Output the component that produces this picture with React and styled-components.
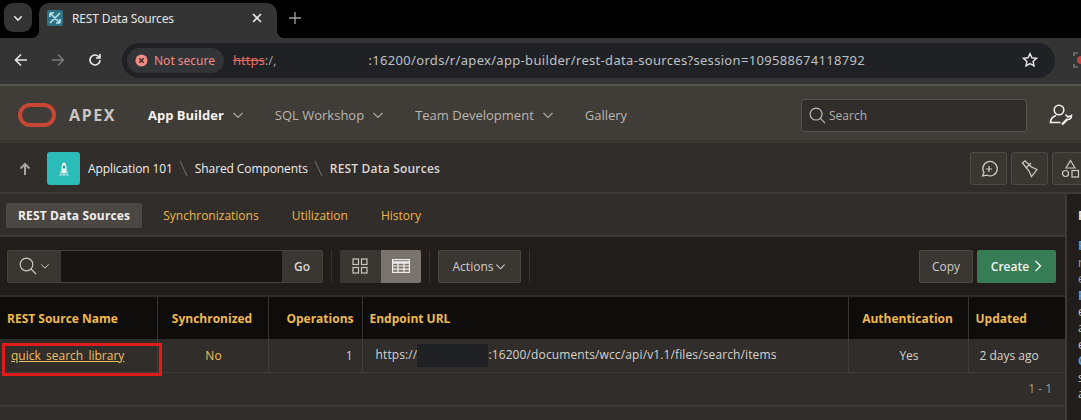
import React from 'react'
import styled, {createGlobalStyle} from 'styled-components'

const Global = createGlobalStyle`
  html, body {
    margin: 0;
    padding: 0;
    background: #312d2a;
    overflow: hidden;
  }
  * {
    box-sizing: border-box;
  }
`

const Chevron = ({size = 12, color = '#a9a6a1', width = 1.2}) => (
  <svg width={size} height={size} viewBox="0 0 12 12" fill="none" stroke={color} strokeWidth={width}>
    <path d="M1.5 4l4.5 4.5L10.5 4" />
  </svg>
)

const SearchIcon = ({size = 18, color = '#c9c6c2'}) => (
  <svg width={size} height={size} viewBox="0 0 18 18" fill="none" stroke={color} strokeWidth="1.2">
    <circle cx="7.5" cy="7.5" r="6.3" />
    <path d="M12 12l5 5" />
  </svg>
)

const App = () => (
  <Page>
    <Global />
    <TabStrip>
      <TabMenu>
        <Chevron size={10} color="#e8e8e8" width={1.8} />
      </TabMenu>
      <Tab>
        <Favicon>
          <svg width="16" height="16" viewBox="0 0 16 16" fill="none" stroke="#b5dde3" strokeWidth="1.7">
            <path d="M3 3l10 10M13 3L3 13M3 3h4M3 3v4M13 13H9M13 13V9" />
          </svg>
        </Favicon>
        <TabTitle>REST Data Sources</TabTitle>
        <TabClose>
          <svg width="10" height="10" viewBox="0 0 10 10" stroke="#e8e8e8" strokeWidth="1.6">
            <path d="M1 1l8 8M9 1L1 9" />
          </svg>
        </TabClose>
      </Tab>
      <NewTab>
        <svg width="12" height="12" viewBox="0 0 12 12" stroke="#a0a0a0" strokeWidth="1.3">
          <path d="M6 0v12M0 6h12" />
        </svg>
      </NewTab>
    </TabStrip>

    <BrowserBar>
      <NavButton>
        <svg width="14" height="14" viewBox="0 0 14 14" fill="none" stroke="#e8e8e8" strokeWidth="1.6">
          <path d="M13 7H1.5M7 1.5L1.5 7 7 12.5" />
        </svg>
      </NavButton>
      <NavButton>
        <svg width="14" height="14" viewBox="0 0 14 14" fill="none" stroke="#7c7c7c" strokeWidth="1.4">
          <path d="M1 7h11.5M7 1.5L12.5 7 7 12.5" />
        </svg>
      </NavButton>
      <NavButton>
        <svg width="14" height="14" viewBox="0 0 14 14" fill="none" stroke="#e8e8e8" strokeWidth="1.6">
          <path d="M12 7a5 5 0 1 1-1.5-3.6L12 5M12 1v4H8" />
        </svg>
      </NavButton>
      <Omnibox>
        <SecurityChip>
          <svg width="13" height="13" viewBox="0 0 13 13">
            <circle cx="6.5" cy="6.5" r="6" fill="#f28b82" />
            <path d="M4.3 4.3l4.4 4.4M8.7 4.3L4.3 8.7" stroke="#3a2a2a" strokeWidth="1.5" />
          </svg>
          Not secure
        </SecurityChip>
        <Scheme>https</Scheme>
        <UrlText>:/,</UrlText>
        <UrlRest>:16200/ords/r/apex/app-builder/rest-data-sources?session=109588674118792</UrlRest>
        <Star>
          <svg width="16" height="16" viewBox="0 0 16 16" fill="none" stroke="#e8e8e8" strokeWidth="1.4">
            <path d="M8 1.6l1.9 4.2 4.6.5-3.4 3.1.9 4.5L8 11.6l-4 2.3.9-4.5L1.5 6.3l4.6-.5z" />
          </svg>
        </Star>
      </Omnibox>
      <ExtensionIcon>
        <svg width="12" height="18" viewBox="0 0 12 18" fill="none">
          <path d="M5 2H1v3M1 13v3h4" stroke="#8a8a8a" strokeWidth="1.2" />
          <circle cx="8" cy="9" r="4" fill="#c0453d" />
        </svg>
      </ExtensionIcon>
    </BrowserBar>

    <ApexHeader>
      <Logo>
        <svg width="38" height="26" viewBox="0 0 38 26" fill="none">
          <rect x="2" y="3" width="34" height="20" rx="10" stroke="#c74634" strokeWidth="4" />
        </svg>
        <LogoText>APEX</LogoText>
      </Logo>
      <MainNav>
        <MainNavItem $active>
          App Builder <Chevron />
        </MainNavItem>
        <MainNavItem>
          SQL Workshop <Chevron />
        </MainNavItem>
        <MainNavItem>
          Team Development <Chevron />
        </MainNavItem>
        <MainNavItem>Gallery</MainNavItem>
      </MainNav>
      <HeaderSearch>
        <SearchIcon size={17} color="#c2bfbb" />
        <span>Search</span>
      </HeaderSearch>
      <UserIcon>
        <svg width="24" height="22" viewBox="0 0 24 22" fill="none" stroke="#f4f2f0" strokeWidth="1.6">
          <circle cx="10" cy="6" r="4.8" />
          <path d="M7 11.5C4 12.5 1.5 14.5 1.5 18.5h10" />
          <path d="M13 20.5l5.5-5.5" strokeWidth="2.4" />
          <path d="M16.5 10.5l2.5 2.5 3.5-1.5c0 2.5-1.5 4-4 4" />
        </svg>
      </UserIcon>
    </ApexHeader>

    <Breadcrumb>
      <UpArrow>
        <svg width="12" height="13" viewBox="0 0 12 13" fill="none" stroke="#a8a4a0" strokeWidth="2">
          <path d="M6 13V2M1.5 6.5L6 2l4.5 4.5" />
        </svg>
      </UpArrow>
      <AppBadge>
        <svg width="12" height="16" viewBox="0 0 12 16">
          <path d="M1.5 15l1-5h1v5zM10.5 15l-1-5h-1v5z" fill="#9fdcd9" />
          <path d="M6 1c1.5 1 2.5 3 2.5 5.5V12h-5V6.5C3.5 4 4.5 2 6 1z" fill="#eefaf9" />
          <rect x="4.8" y="4.5" width="2.4" height="3" fill="#2a8f8c" />
          <rect x="4.5" y="12.5" width="3" height="2" fill="#bfeae8" />
        </svg>
      </AppBadge>
      <Crumb>Application 101</Crumb>
      <CrumbDivider />
      <Crumb>Shared Components</Crumb>
      <CrumbDivider />
      <Crumb $current>REST Data Sources</Crumb>
      <PageTools>
        <ToolButton>
          <svg width="20" height="20" viewBox="0 0 20 20" fill="none" stroke="#d0cdc9" strokeWidth="1.2">
            <path d="M3.5 17L5 13.6a7.2 7.2 0 1 1 3 2.6z" />
            <path d="M10 7v6M7 10h6" />
          </svg>
        </ToolButton>
        <ToolButton>
          <svg width="20" height="20" viewBox="0 0 20 20" fill="none" stroke="#d0cdc9" strokeWidth="1.2">
            <path d="M2.5 4L5 1.8 11.5 8l5.5 2.5-5.5 7L9 12z" />
            <path d="M6 9l5-5" />
          </svg>
        </ToolButton>
        <ToolButton>
          <svg width="20" height="20" viewBox="0 0 20 20" fill="none" stroke="#d0cdc9" strokeWidth="1.2">
            <path d="M9.5 1.5L14 9H5z" />
            <circle cx="4.5" cy="14.5" r="3" />
            <rect x="11" y="11.5" width="6.5" height="6.5" />
          </svg>
        </ToolButton>
      </PageTools>
    </Breadcrumb>

    <Body>
      <Main>
        <TabsRow>
          <PageTab $active>REST Data Sources</PageTab>
          <PageTab>Synchronizations</PageTab>
          <PageTab>Utilization</PageTab>
          <PageTab>History</PageTab>
        </TabsRow>

        <Toolbar>
          <SearchGroup>
            <SearchToggle>
              <SearchIcon size={18} />
              <Chevron size={10} color="#c9c6c2" />
            </SearchToggle>
            <SearchInput />
            <GoButton>Go</GoButton>
          </SearchGroup>
          <ToolbarDivider />
          <ViewToggle>
            <ViewButton>
              <svg width="16" height="16" viewBox="0 0 16 16" fill="none" stroke="#c9c6c2" strokeWidth="1.2">
                <rect x="1" y="1" width="5.5" height="5.5" />
                <rect x="9.5" y="1" width="5.5" height="5.5" />
                <rect x="1" y="9.5" width="5.5" height="5.5" />
                <rect x="9.5" y="9.5" width="5.5" height="5.5" />
              </svg>
            </ViewButton>
            <ViewButton $active>
              <svg width="18" height="14" viewBox="0 0 18 14" fill="none" stroke="#f0eeec" strokeWidth="1.2">
                <rect x="0.6" y="0.6" width="16.8" height="12.8" />
                <path d="M0.6 3.5h16.8" strokeWidth="2.6" />
                <path d="M0.6 7h16.8M0.6 10.2h16.8M6 3.5v9.9M12 3.5v9.9" />
              </svg>
            </ViewButton>
          </ViewToggle>
          <ToolbarDivider />
          <ActionsButton>
            Actions <Chevron size={11} color="#d0cdc9" />
          </ActionsButton>
          <ToolbarDivider />
          <RightActions>
            <CopyButton>Copy</CopyButton>
            <CreateButton>
              Create
              <svg width="8" height="12" viewBox="0 0 8 12" fill="none" stroke="#f2f7f3" strokeWidth="1.4">
                <path d="M1.5 1l5 5-5 5" />
              </svg>
            </CreateButton>
          </RightActions>
        </Toolbar>

        <Report>
          <thead>
            <tr>
              <HeadCell $width={157}>REST Source Name</HeadCell>
              <HeadCell $width={111} $align="center">Synchronized</HeadCell>
              <HeadCell $width={94} $align="right">Operations</HeadCell>
              <HeadCell>Endpoint URL</HeadCell>
              <HeadCell $width={120} $align="center">Authentication</HeadCell>
              <HeadCell $width={97}>Updated</HeadCell>
            </tr>
          </thead>
          <tbody>
            <tr>
              <Cell>
                <SourceLink>quick_search_library</SourceLink>
                <Highlight />
              </Cell>
              <Cell $align="center" $accent>No</Cell>
              <Cell $align="right">1</Cell>
              <UrlCell>
                https://<Redacted />:16200/documents/wcc/api/v1.1/files/search/items
              </UrlCell>
              <Cell $align="center">Yes</Cell>
              <Cell>2 days ago</Cell>
            </tr>
          </tbody>
        </Report>
        <Pagination>1 - 1</Pagination>
      </Main>

      <Aside>
        <AsideLine $kind="heading">R</AsideLine>
        <AsideLines>
          <AsideLine $kind="link">R</AsideLine>
          <AsideLine $kind="muted">r</AsideLine>
          <AsideLine $kind="muted">e</AsideLine>
          <AsideLine $kind="link">R</AsideLine>
          <AsideLine>e</AsideLine>
          <AsideLine>a</AsideLine>
          <AsideLine>e</AsideLine>
          <AsideLine $kind="link">C</AsideLine>
          <AsideLine>s</AsideLine>
          <AsideLine>a</AsideLine>
        </AsideLines>
      </Aside>
    </Body>
  </Page>
)

export default App

const Page = styled.div`
  width: 1081px;
  height: 420px;
  overflow: hidden;
  display: flex;
  flex-direction: column;
  font-family: "Open Sans", "Liberation Sans", sans-serif;
  font-size: 12px;
  color: #d6d3cf;
`

const TabStrip = styled.div`
  height: 38px;
  background: #000;
  display: flex;
  align-items: flex-end;
  padding-left: 4px;
`

const TabMenu = styled.div`
  width: 28px;
  height: 29px;
  margin-bottom: 6px;
  border-radius: 9px;
  background: #333;
  display: flex;
  align-items: center;
  justify-content: center;
`

const Tab = styled.div`
  position: relative;
  width: 238px;
  height: 35px;
  margin-left: 7px;
  padding: 0 15px 5px 8px;
  background: #343434;
  border-radius: 10px 10px 0 0;
  display: flex;
  align-items: center;
  gap: 9px;

  &::before,
  &::after {
    content: '';
    position: absolute;
    bottom: 0;
    width: 8px;
    height: 8px;
  }
  &::before {
    left: -8px;
    background: radial-gradient(circle at 0 0, transparent 8px, #343434 8.5px);
  }
  &::after {
    right: -8px;
    background: radial-gradient(circle at 100% 0, transparent 8px, #343434 8.5px);
  }
`

const Favicon = styled.div`
  width: 16px;
  height: 16px;
  background: #2f7486;
  border-radius: 2px;
  display: flex;
`

const TabTitle = styled.span`
  flex: 1;
  font-family: "Noto Sans", sans-serif;
  font-size: 12px;
  letter-spacing: -0.15px;
  color: #e4e4e4;
`

const TabClose = styled.div`
  display: flex;
`

const NewTab = styled.div`
  margin: 0 0 14px 12px;
  display: flex;
`

const BrowserBar = styled.div`
  height: 48px;
  background: #343434;
  border-bottom: 2px solid #555;
  display: flex;
  align-items: center;
  padding: 0 0 2px 14px;
`

const NavButton = styled.div`
  flex-shrink: 0;
  width: 37px;
  display: flex;
`

const Omnibox = styled.div`
  flex-shrink: 0;
  width: 933px;
  height: 35px;
  margin-left: -3px;
  background: #202124;
  border-radius: 18px;
  display: flex;
  align-items: center;
  padding: 0 17px 0 5px;
  font-family: "Noto Sans", sans-serif;
  font-size: 13px;
  color: #bdc1c6;
`

const SecurityChip = styled.div`
  height: 25px;
  padding: 0 9px 0 8px;
  border-radius: 13px;
  background: #333437;
  color: #f28b82;
  font-size: 12px;
  display: flex;
  align-items: center;
  gap: 6px;
`

const Scheme = styled.span`
  margin-left: 9px;
  color: #e46962;
  text-decoration: line-through;
`

const UrlText = styled.span`
  color: #9aa0a6;
`

const UrlRest = styled.span`
  margin-left: 92px;
  flex: 1;
  letter-spacing: 0.32px;
`

const Star = styled.div`
  display: flex;
`

const ExtensionIcon = styled.div`
  flex-shrink: 0;
  margin-left: 18px;
  display: flex;
`

const ApexHeader = styled.header`
  height: 57px;
  background: #403c37;
  border-bottom: 3px solid #3a3733;
  display: flex;
  align-items: center;
  padding: 4px 0 0 18px;
`

const Logo = styled.div`
  display: flex;
  align-items: center;
  gap: 13px;
  width: 130px;
`

const LogoText = styled.span`
  font-family: "Noto Sans", sans-serif;
  font-weight: 700;
  font-size: 16px;
  letter-spacing: 1.6px;
  color: #c8c5c1;
`

const MainNav = styled.nav`
  display: flex;
  align-items: center;
  gap: 31px;
`

const MainNavItem = styled.div`
  display: flex;
  align-items: center;
  gap: 8px;
  font-size: 13px;
  font-weight: ${props => (props.$active ? 700 : 400)};
  color: ${props => (props.$active ? '#f5f4f2' : '#bab6b1')};
`

const HeaderSearch = styled.div`
  width: 226px;
  height: 33px;
  margin-left: auto;
  background: #312d2a;
  border: 1px solid #56524d;
  border-radius: 3px;
  padding-left: 7px;
  display: flex;
  align-items: center;
  gap: 3px;
  color: #b3afaa;
`

const UserIcon = styled.div`
  margin: 0 8px 0 22px;
  display: flex;
`

const Breadcrumb = styled.div`
  height: 51px;
  background: #312d2a;
  border-bottom: 2px solid #3d3935;
  display: flex;
  align-items: center;
  padding: 2px 0 0 19px;
`

const UpArrow = styled.div`
  width: 28px;
  display: flex;
`

const AppBadge = styled.div`
  width: 33px;
  height: 33px;
  background: #2bbcb8;
  border-radius: 3px;
  display: flex;
  align-items: center;
  justify-content: center;
  margin-right: 8px;
`

const Crumb = styled.span`
  font-weight: ${props => (props.$current ? 600 : 400)};
  letter-spacing: ${props => (props.$current ? 0.2 : -0.1)}px;
  color: ${props => (props.$current ? '#dcd9d5' : '#f0eeec')};
`

const CrumbDivider = styled.span`
  width: 1px;
  height: 17px;
  margin: 0 10.5px;
  background: #6d6964;
  transform: rotate(-25deg);
`

const PageTools = styled.div`
  margin-left: auto;
  margin-right: -8px;
  display: flex;
  gap: 4px;
`

const ToolButton = styled.div`
  width: 37px;
  height: 33px;
  background: #3a3632;
  border: 1px solid #4d4945;
  border-radius: 3px;
  display: flex;
  align-items: center;
  justify-content: center;
`

const Body = styled.div`
  flex: 1;
  display: flex;
  min-height: 0;
`

const Main = styled.main`
  width: 1065px;
  display: flex;
  flex-direction: column;
`

const TabsRow = styled.div`
  height: 43px;
  display: flex;
  align-items: center;
  padding: 2px 0 0 6px;
  border-bottom: 2px solid #3d3935;
`

const PageTab = styled.div`
  height: 25px;
  padding: 0 ${props => (props.$active ? 12 : 0)}px;
  margin-right: ${props => (props.$active ? 21 : 33)}px;
  border-radius: 2px;
  display: flex;
  align-items: center;
  font-weight: ${props => (props.$active ? 700 : 400)};
  letter-spacing: ${props => (props.$active ? 0.15 : 0)}px;
  background: ${props => (props.$active ? '#4b4742' : 'transparent')};
  color: ${props => (props.$active ? '#f2f0ee' : '#f0b649')};
`

const Toolbar = styled.div`
  height: 58px;
  background: #201d1b;
  display: flex;
  align-items: center;
  padding: 0 9px 0 7px;
`

const SearchGroup = styled.div`
  display: flex;
  height: 33px;
  border: 1px solid #45413d;
  border-radius: 2px;
`

const SearchToggle = styled.div`
  width: 53px;
  background: #3a3632;
  display: flex;
  align-items: center;
  justify-content: center;
  gap: 3px;
`

const SearchInput = styled.div`
  width: 221px;
  background: #161513;
`

const GoButton = styled.div`
  width: 40px;
  background: #3a3632;
  color: #dad7d3;
  font-weight: 600;
  display: flex;
  align-items: center;
  justify-content: center;
`

const ToolbarDivider = styled.span`
  width: 1px;
  height: 33px;
  margin: 0 8px;
  background: #35312e;
`

const ViewToggle = styled.div`
  display: flex;
  height: 33px;
  border-radius: 2px;
  overflow: hidden;
`

const ViewButton = styled.div`
  width: 40.5px;
  background: ${props => (props.$active ? '#7a746e' : '#3a3632')};
  display: flex;
  align-items: center;
  justify-content: center;
`

const ActionsButton = styled.div`
  width: 83px;
  height: 33px;
  background: #3a3632;
  border: 1px solid #4a4642;
  border-radius: 2px;
  color: #d0cdc9;
  display: flex;
  align-items: center;
  justify-content: center;
  gap: 2px;
`

const RightActions = styled.div`
  margin-left: auto;
  display: flex;
  gap: 4px;
`

const CopyButton = styled.div`
  width: 54px;
  height: 33px;
  background: #3a3632;
  border: 1px solid #4d4945;
  border-radius: 2px;
  color: #d0cdc9;
  display: flex;
  align-items: center;
  justify-content: center;
`

const CreateButton = styled.div`
  width: 79px;
  height: 33px;
  background: #367c54;
  border-radius: 2px;
  color: #f2f7f3;
  font-weight: 600;
  display: flex;
  align-items: center;
  justify-content: center;
  gap: 5px;
`

const Report = styled.table`
  width: 100%;
  border-collapse: collapse;
  table-layout: fixed;
`

const HeadCell = styled.th`
  width: ${props => (props.$width ? `${props.$width}px` : 'auto')};
  height: 43px;
  padding: 0 8px 0 7px;
  background: #0e0d0c;
  border-top: 2px solid #2e2b28;
  border-right: 1px solid #37332f;
  text-align: ${props => props.$align || 'left'};
  font-size: 12px;
  font-weight: 700;
  color: #f0b84f;
  &:last-child {
    border-right: 0;
  }
`

const Cell = styled.td`
  position: relative;
  height: 33px;
  padding: 0 9px 0 11px;
  background: #312d2a;
  border-right: 1px solid #413d39;
  border-bottom: 1px solid #413d39;
  text-align: ${props => props.$align || 'left'};
  color: ${props => (props.$accent ? '#f0c060' : '#d6d3cf')};
  white-space: nowrap;
  &:last-child {
    border-right: 0;
  }
`

const UrlCell = styled(Cell)`
  padding-left: 13px;
  letter-spacing: 0.12px;
`

const SourceLink = styled.a`
  color: #f0c060;
  text-decoration: underline;
`

const Highlight = styled.span`
  position: absolute;
  z-index: 1;
  left: 2px;
  top: 4px;
  width: 160px;
  height: 33px;
  border: 3px solid #e01b1b;
  pointer-events: none;
`

const Redacted = styled.span`
  display: inline-block;
  width: 71px;
  height: 23px;
  vertical-align: middle;
  background: #202124;
`

const Pagination = styled.div`
  height: 34px;
  padding-right: 13px;
  border-bottom: 2px solid #3d3935;
  display: flex;
  align-items: center;
  justify-content: flex-end;
  color: #9d9995;
`

const Aside = styled.aside`
  flex: 1;
  background: #201d1b;
  border-left: 2px solid #3d3935;
  padding: 14px 0 0 11px;
  overflow: hidden;
`

const AsideLines = styled.div`
  margin-top: 14px;
`

const asideColors = {
  heading: '#e6e3df',
  link: '#4f9fd8',
  muted: '#8fa6b5',
}

const AsideLine = styled.div`
  line-height: 16.4px;
  font-weight: ${props => (props.$kind === 'heading' || props.$kind === 'link' ? 700 : 400)};
  color: ${props => asideColors[props.$kind] || '#c8c5c1'};
`
